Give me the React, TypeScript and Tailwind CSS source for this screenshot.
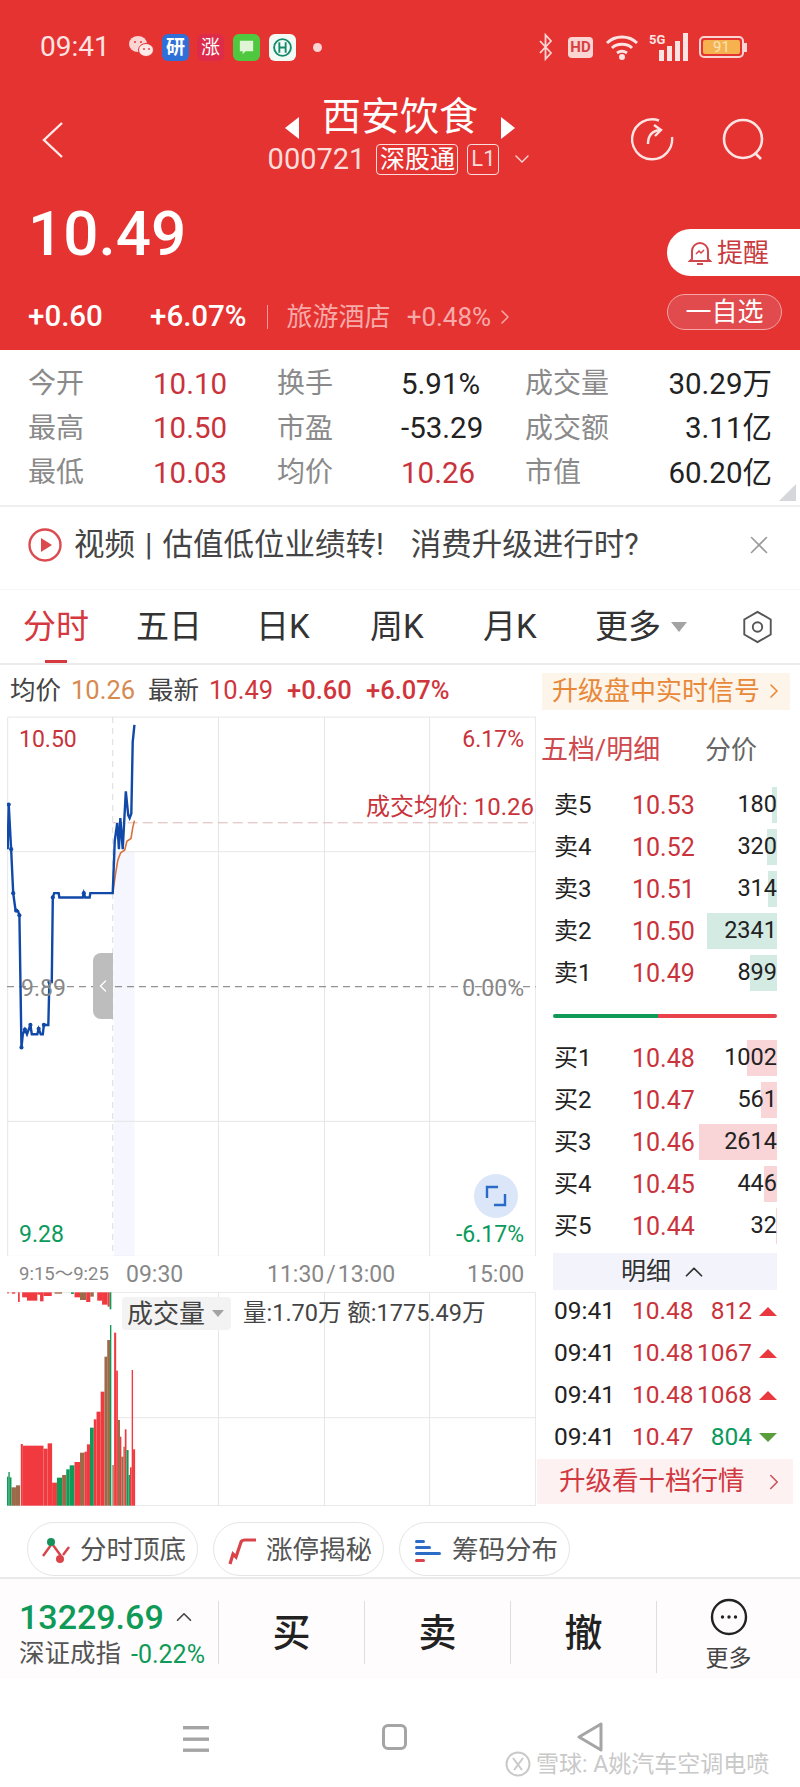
import { ChevronDown, ChevronLeft, ChevronRight, ChevronUp, X } from "lucide-react";

const sell = [
  { label: "卖5", price: "10.53", qty: "180", bar: 5 },
  { label: "卖4", price: "10.52", qty: "320", bar: 10 },
  { label: "卖3", price: "10.51", qty: "314", bar: 9 },
  { label: "卖2", price: "10.50", qty: "2341", bar: 70 },
  { label: "卖1", price: "10.49", qty: "899", bar: 27 }
];

const buy = [
  { label: "买1", price: "10.48", qty: "1002", bar: 30 },
  { label: "买2", price: "10.47", qty: "561", bar: 16 },
  { label: "买3", price: "10.46", qty: "2614", bar: 78 },
  { label: "买4", price: "10.45", qty: "446", bar: 13 },
  { label: "买5", price: "10.44", qty: "32", bar: 1 }
];

const ticks = [
  { price: "10.48", qty: "812", up: true },
  { price: "10.48", qty: "1067", up: true },
  { price: "10.48", qty: "1068", up: true },
  { price: "10.47", qty: "804", up: false }
];

const stats = [
  ["今开", "10.10", "换手", "5.91%", "成交量", "30.29万"],
  ["最高", "10.50", "市盈", "-53.29", "成交额", "3.11亿"],
  ["最低", "10.03", "均价", "10.26", "市值", "60.20亿"]
];

const linePoints =
  "22,390 25,265 32,390 38,513 45,562 52,563 56,575 62,945 66,908 72,895 78,908 88,882 92,908 108,908 112,893 118,908 124,908 127,882 140,882 143,762 150,762 153,525 157,513 170,513 172,525 240,525 243,513 247,525 260,525 262,513 327,513 333,365 340,317 345,390 349,303 356,390 365,228 372,295 376,303 381,290 385,90 390,42";

const avgPoints = "327,513 335,460 342,420 350,400 362,392 368,368 380,360 385,330 390,310";

const RED = "#f03a40";
const GREEN = "#0f9a58";
const MIX = "#9c6a48";

// x0, x1, top (all in zoomed chart units), colour
const volumeBars: [number, number, number, string][] = [
  [20, 24, 650, GREEN], [24, 28, 636, GREEN], [28, 33, 652, GREEN], [33, 46, 682, MIX], [46, 58, 676, MIX],
  [60, 66, 552, RED], [66, 126, 557, RED], [126, 138, 566, RED], [138, 151, 550, RED], [151, 165, 668, RED],
  [165, 180, 653, GREEN], [180, 192, 645, MIX], [192, 202, 628, GREEN], [202, 216, 616, GREEN], [216, 232, 606, RED],
  [232, 245, 578, MIX], [245, 252, 575, RED], [252, 261, 553, RED], [261, 272, 503, GREEN], [272, 280, 478, RED],
  [280, 292, 455, RED], [292, 303, 395, RED], [303, 311, 290, MIX], [311, 319, 240, MIX], [319, 323, 195, GREEN],
  [326, 330, 615, MIX], [331, 337, 218, RED], [337, 342, 332, RED], [342, 348, 480, MIX], [348, 352, 530, RED],
  [352, 358, 590, MIX], [358, 362, 560, MIX], [362, 367, 508, RED], [367, 373, 570, GREEN], [373, 377, 645, GREEN],
  [377, 382, 622, RED], [382, 386, 330, RED], [386, 392, 568, RED]
];

const auctionBars: [number, number, number, string][] = [
  [20, 26, 100, RED], [34, 44, 101, RED], [52, 57, 126, RED], [64, 78, 112, RED], [78, 108, 122, RED],
  [108, 116, 104, RED], [116, 126, 124, RED], [126, 150, 108, RED], [158, 180, 101, MIX], [206, 214, 102, GREEN],
  [216, 232, 112, RED], [232, 250, 120, MIX], [250, 262, 126, RED], [262, 272, 110, MIX], [282, 296, 122, RED],
  [296, 312, 134, RED], [312, 318, 140, RED], [318, 323, 148, GREEN]
];

function StatusIcons() {
  return (
    <div className="flex h-[94px] items-center pl-[40px] pr-[53px] text-[#fde4e3]">
      <span className="w-[88px] text-[28px] leading-none">09:41</span>
      <svg viewBox="0 0 26 24" className="h-[24px] w-[26px]" aria-hidden="true">
        <ellipse cx="10" cy="9" rx="9" ry="8" fill="#fbd5d3" />
        <ellipse cx="18" cy="15" rx="7.5" ry="6.5" fill="#fde9e8" stroke="#e53332" strokeWidth="1" />
        <circle cx="7" cy="7" r="1" fill="#e53332" />
        <circle cx="13" cy="7" r="1" fill="#e53332" />
        <circle cx="16" cy="14" r="0.9" fill="#e53332" />
        <circle cx="21" cy="14" r="0.9" fill="#e53332" />
      </svg>
      <div className="ml-[8px] flex h-[27px] w-[27px] items-center justify-center rounded-[6px] bg-[#2f6fd8] text-[19px] font-bold leading-none text-white">研</div>
      <div className="ml-[8px] flex h-[27px] w-[27px] items-center justify-center rounded-[6px] bg-[#dd2b4a] text-[19px] leading-none text-white">涨</div>
      <div className="ml-[9px] flex h-[27px] w-[27px] items-center justify-center rounded-[6px] bg-[#4fc83f]">
        <svg viewBox="0 0 20 20" className="h-[19px] w-[19px]" aria-hidden="true">
          <path d="M3 3h14v11H9l-3 3v-3H3z" fill="#dff5d5" />
        </svg>
      </div>
      <div className="ml-[9px] flex h-[27px] w-[27px] items-center justify-center rounded-[6px] bg-[#f2faf6]">
        <svg viewBox="0 0 20 20" className="h-[21px] w-[21px]" aria-hidden="true">
          <circle cx="10" cy="10" r="8" fill="none" stroke="#168a6a" strokeWidth="1.8" />
          <path d="M7 5v10M13 5v10M7 10h6" stroke="#168a6a" strokeWidth="1.8" />
        </svg>
      </div>
      <div className="ml-[17px] h-[9px] w-[9px] rounded-full bg-[#fbd5d3]" />
      <div className="ml-auto flex items-center">
        <svg viewBox="0 0 16 28" className="h-[28px] w-[16px]" fill="none" stroke="#fbd5d3" strokeWidth="1.8" aria-hidden="true">
          <path d="M2 8l11 12-5.5 6V2L13 8 2 20" />
        </svg>
        <div className="ml-[14px] flex h-[21px] w-[25px] items-center justify-center rounded-[4px] bg-[#fbd5d3] text-[15px] font-bold leading-none text-[#d8403f]">HD</div>
        <svg viewBox="0 0 34 26" className="ml-[12px] h-[26px] w-[34px]" fill="none" stroke="#fde4e3" strokeWidth="3" aria-hidden="true">
          <path d="M2 9c8-8 22-8 30 0M7 14c5-5 15-5 20 0M12 19c3-2 7-2 10 0" />
          <circle cx="17" cy="23" r="1.5" fill="#fde4e3" />
        </svg>
        <div className="relative ml-[10px] h-[28px] w-[39px]">
          <span className="absolute left-0 top-0 text-[13px] font-bold leading-none">5G</span>
          <div className="absolute bottom-0 right-0 flex items-end gap-[3px]">
            <div className="h-[11px] w-[5px] bg-[#fde4e3]" />
            <div className="h-[15px] w-[5px] bg-[#fde4e3]" />
            <div className="h-[20px] w-[5px] bg-[#fde4e3]" />
            <div className="h-[28px] w-[5px] bg-[#fde4e3]" />
          </div>
        </div>
        <div className="ml-[11px] flex h-[22px] w-[45px] items-center rounded-[5px] border-2 border-[#fbd5d3] p-[2px]">
          <div className="flex h-full w-[38px] items-center justify-center rounded-[2px] bg-[#f6b24e] text-[15px] leading-none text-[#fbe3b9]">91</div>
        </div>
        <div className="h-[9px] w-[3px] bg-[#fbd5d3]" />
      </div>
    </div>
  );
}

function Header() {
  return (
    <header className="h-[350px] bg-[#e53332] text-white">
      <StatusIcons />
      <div className="relative h-[88px]">
        <svg viewBox="0 0 24 38" className="absolute left-[41px] top-[27px] h-[38px] w-[24px]" fill="none" stroke="#fde9e8" strokeWidth="2.4" aria-hidden="true">
          <path d="M21 2L3 19l18 17" />
        </svg>
        <div className="flex flex-col items-center pt-[1px]">
          <div className="flex h-[44px] items-center">
            <div className="mt-[22px] h-0 w-0 border-y-[11px] border-r-[14px] border-y-transparent border-r-white" />
            <span className="mx-[23px] text-[39px] leading-none">西安饮食</span>
            <div className="mt-[22px] h-0 w-0 border-y-[11px] border-l-[14px] border-y-transparent border-l-white" />
          </div>
          <div className="mt-[4px] flex h-[32px] items-center pl-[2px] text-[#fbdcda]">
            <span className="text-[29px] leading-none">000721</span>
            <span className="ml-[11px] flex h-[31px] w-[82px] items-center justify-center rounded-[4px] border border-[#fbdcda] text-[25px] leading-none text-white">深股通</span>
            <span className="ml-[9px] flex h-[31px] w-[32px] items-center justify-center rounded-[4px] border border-[#fbdcda] text-[22px] leading-none">L1</span>
            <ChevronDown className="ml-[11px] size-[24px]" strokeWidth={1.4} aria-hidden="true" />
          </div>
        </div>
        <svg viewBox="0 0 44 44" className="absolute left-[631px] top-[23px] size-[44px]" fill="none" stroke="#fde4e3" strokeWidth="2.4" aria-hidden="true">
          <path d="M28 3.5A20 20 0 1 0 41 20" />
          <path d="M17 27c0-8 3-13 12-14M23 8l7 5-6 6" />
        </svg>
        <svg viewBox="0 0 44 44" className="absolute left-[722px] top-[24px] size-[44px]" fill="none" stroke="#fde4e3" strokeWidth="2.6" aria-hidden="true">
          <circle cx="21" cy="21" r="19" />
          <path d="M33 35l6 6" />
        </svg>
      </div>
      <div className="flex h-[168px] justify-between">
        <div className="pl-[28px]">
          <div className="mt-[21px] text-[62px] font-medium leading-[62px]">10.49</div>
          <div className="mt-[37px] flex h-[30px] items-center">
            <span className="w-[122px] text-[29.5px] font-medium leading-none">+0.60</span>
            <span className="text-[29.5px] font-medium leading-none">+6.07%</span>
            <div className="ml-[20px] h-[24px] w-px bg-[#f59a99]" />
            <span className="ml-[19px] text-[26px] leading-none text-[#f7aaa8]">旅游酒店</span>
            <span className="ml-[16px] text-[26px] leading-none text-[#f7aaa8]">+0.48%</span>
            <ChevronRight className="ml-[2px] size-[24px] text-[#f7aaa8]" strokeWidth={1.5} aria-hidden="true" />
          </div>
        </div>
        <div className="flex w-[133px] flex-col pt-[47px]">
          <div className="flex h-[47px] items-center rounded-l-[24px] bg-white pl-[21px] text-[#c93a40]">
            <svg viewBox="0 0 24 26" className="h-[26px] w-[24px]" fill="none" stroke="#d2474c" strokeWidth="2" aria-hidden="true">
              <path d="M4 19V11a8 8 0 0 1 16 0v8l2 2H2zM9 24h6" />
              <path d="M8 14l3-3 2 2 3-3" strokeWidth="1.5" />
            </svg>
            <span className="ml-[5px] text-[26px] leading-none">提醒</span>
          </div>
          <div className="mt-[18px] flex h-[36px] w-[115px] items-center justify-center rounded-full border border-[#f4a5a4] bg-[#e14b4d] text-[26px] leading-none">一自选</div>
        </div>
      </div>
    </header>
  );
}

function StatsTable() {
  return (
    <section className="relative h-[157px] border-b-2 border-[#efefef] px-[28px] pt-[12px]">
      {stats.map((row) => (
        <div key={row[0]} className="grid h-[44.5px] grid-cols-[125px_124px_124px_124px_1fr] items-center leading-none">
          <span className="text-[28px] text-[#8a8a8a]">{row[0]}</span>
          <span className="text-[29.5px] text-[#c9333b]">{row[1]}</span>
          <span className="text-[28px] text-[#8a8a8a]">{row[2]}</span>
          <span className={`text-[29.5px] ${row[2] === "均价" ? "text-[#c9333b]" : "text-[#222]"}`}>{row[3]}</span>
          <div className="flex items-center justify-between">
            <span className="text-[28px] text-[#8a8a8a]">{row[4]}</span>
            <span className="text-[29.5px] text-[#222]">{row[5]}</span>
          </div>
        </div>
      ))}
      <div className="absolute bottom-[4px] right-[4px] h-0 w-0 border-b-[17px] border-l-[17px] border-b-[#d5d7da] border-l-transparent" />
    </section>
  );
}

function VideoBanner() {
  return (
    <section className="flex h-[83px] items-center border-b border-[#f7f7f7] pb-[6px] pl-[28px] pr-[26px]">
      <svg viewBox="0 0 34 34" className="size-[34px]" aria-hidden="true">
        <circle cx="17" cy="17" r="15.5" fill="none" stroke="#dc4a4f" strokeWidth="2.4" />
        <path d="M13 10l11 7-11 7z" fill="#dc4a4f" />
      </svg>
      <div className="ml-[12px] flex whitespace-nowrap text-[30.5px] leading-none text-[#444]">
        <span>视频</span>
        <span className="mx-[10px]">|</span>
        <span>估值低位业绩转!</span>
        <span className="ml-[27px]">消费升级进行时?</span>
      </div>
      <X className="ml-auto size-[30px] text-[#999]" strokeWidth={1.3} aria-hidden="true" />
    </section>
  );
}

function Tabs() {
  return (
    <nav className="relative flex h-[75px] items-center border-b-2 border-[#ececec] pl-[23px] text-[33px] leading-none text-[#333]">
      <span className="w-[113px] text-[#d6383f]">分时</span>
      <span className="w-[120px]">五日</span>
      <span className="w-[114px]">日K</span>
      <span className="w-[113px]">周K</span>
      <span className="w-[112px]">月K</span>
      <span>更多</span>
      <div className="ml-[10px] h-0 w-0 border-x-[8px] border-t-[10px] border-x-transparent border-t-[#a3a3a3]" />
      <svg viewBox="0 0 32 36" className="ml-[55px] h-[34px] w-[31px]" fill="none" stroke="#555" strokeWidth="2" aria-hidden="true">
        <path d="M16 2l14 8v16l-14 8-14-8V10z" />
        <circle cx="16" cy="18" r="5" />
      </svg>
      <div className="absolute bottom-0 left-[45px] h-[3px] w-[22px] bg-[#d6383f]" />
    </nav>
  );
}

function QuoteLine() {
  return (
    <section className="flex h-[51px] items-center pl-[10px] pr-[10px] pt-[1px] text-[25.5px] leading-none">
      <span className="w-[61px] text-[#444]">均价</span>
      <span className="w-[77px] text-[#d68a50]">10.26</span>
      <span className="w-[61px] text-[#444]">最新</span>
      <span className="w-[78px] text-[#d1353c]">10.49</span>
      <span className="w-[79px] font-medium text-[#d1353c]">+0.60</span>
      <span className="font-medium text-[#d1353c]">+6.07%</span>
      <div className="ml-auto flex h-[37px] w-[248px] items-center bg-[#fdf4ea] pl-[10px] text-[26px] text-[#e8893a]">
        <span>升级盘中实时信号</span>
        <ChevronRight className="ml-[2px] size-[24px]" strokeWidth={1.6} aria-hidden="true" />
      </div>
    </section>
  );
}

function PriceChart() {
  return (
    <div className="relative h-[540px]">
      <svg viewBox="20 17 1536 1512" preserveAspectRatio="none" className="absolute inset-0 h-full w-full" aria-hidden="true">
        <rect x="330" y="397" width="60" height="1133" fill="#f5f6fe" />
        <rect x="22" y="20" width="1533" height="1510" fill="none" stroke="#e6e6e6" strokeWidth="1" vectorEffect="non-scaling-stroke" />
        <path d="M22 397H1555M22 1152H1555M634 20V1530M942 20V1530M1247 20V1530" stroke="#e6e6e6" fill="none" vectorEffect="non-scaling-stroke" />
        <path d="M327 20V1530" stroke="#dcdcdc" strokeDasharray="6 5" fill="none" vectorEffect="non-scaling-stroke" />
        <path d="M327 316H1550" stroke="#dcb7b7" strokeDasharray="10 5" fill="none" vectorEffect="non-scaling-stroke" />
        <path d="M20 775H1555" stroke="#777" strokeDasharray="7 5" fill="none" vectorEffect="non-scaling-stroke" />
        <polyline points={avgPoints} fill="none" stroke="#d9723c" strokeWidth="1.6" vectorEffect="non-scaling-stroke" />
        <polyline points={linePoints} fill="none" stroke="#1149a8" strokeWidth="2.4" vectorEffect="non-scaling-stroke" />
        <g fill="#1149a8">
          <ellipse cx="25" cy="265" rx="6" ry="6" />
          <ellipse cx="32" cy="390" rx="6" ry="6" />
          <ellipse cx="38" cy="513" rx="6" ry="6" />
          <ellipse cx="47" cy="562" rx="6" ry="6" />
          <ellipse cx="56" cy="575" rx="6" ry="6" />
          <ellipse cx="62" cy="945" rx="6" ry="6" />
          <ellipse cx="72" cy="895" rx="6" ry="6" />
          <ellipse cx="88" cy="882" rx="6" ry="6" />
          <ellipse cx="112" cy="893" rx="6" ry="6" />
          <ellipse cx="127" cy="882" rx="6" ry="6" />
          <ellipse cx="143" cy="762" rx="6" ry="6" />
          <ellipse cx="153" cy="525" rx="6" ry="6" />
          <ellipse cx="243" cy="513" rx="6" ry="6" />
        </g>
      </svg>
      <span className="absolute left-[12px] top-[12px] text-[23px] leading-[23px] text-[#c9333b]">10.50</span>
      <span className="absolute right-[12px] top-[12px] text-[23px] leading-[23px] text-[#c9333b]">6.17%</span>
      <span className="absolute right-[2px] top-[79px] text-[24px] leading-[24px] text-[#c9333b]">成交均价: 10.26</span>
      <span className="absolute left-[14px] top-[261px] text-[23px] leading-[23px] text-[#888]">9.89</span>
      <span className="absolute right-[12px] top-[261px] text-[23px] leading-[23px] text-[#888]">0.00%</span>
      <span className="absolute bottom-[10px] left-[12px] text-[23px] leading-[23px] text-[#0a9a5c]">9.28</span>
      <span className="absolute bottom-[10px] right-[12px] text-[23px] leading-[23px] text-[#0a9a5c]">-6.17%</span>
      <div className="absolute left-[86px] top-[237px] flex h-[66px] w-[20px] items-center justify-center rounded-l-[8px] bg-[#bdbdbd]">
        <ChevronLeft className="size-[24px] text-white" strokeWidth={1.6} aria-hidden="true" />
      </div>
      <div className="absolute left-[467px] top-[458px] flex size-[44px] items-center justify-center rounded-full bg-[#dbe7f8]">
        <svg viewBox="0 0 24 24" className="size-[24px]" fill="none" stroke="#2a6ac8" strokeWidth="2.4" aria-hidden="true">
          <path d="M3 14V3h11M21 10v11H10" />
        </svg>
      </div>
    </div>
  );
}

function VolumeChart() {
  return (
    <div className="relative h-[214px]">
      <svg viewBox="20 96 1536 642" preserveAspectRatio="none" className="absolute inset-0 h-full w-full" aria-hidden="true">
        <path d="M22 97H1555M327 473H1555M22 737H1555M1555 97V737M634 97V737M942 97V737M1247 97V737" stroke="#e6e6e6" fill="none" vectorEffect="non-scaling-stroke" />
        {auctionBars.map(([x0, x1, h, color]) => (
          <rect key={x0} x={x0} y="97" width={x1 - x0} height={h - 97} fill={color} />
        ))}
        {volumeBars.map(([x0, x1, top, color]) => (
          <rect key={x0} x={x0} y={top} width={x1 - x0} height={737 - top} fill={color} />
        ))}
      </svg>
      <div className="absolute left-[115px] top-[5px] flex h-[33px] w-[109px] items-center rounded-[4px] bg-[#f3f3f3] pl-[5px] text-[26px] leading-none text-[#444]">
        <span>成交量</span>
        <div className="ml-[7px] h-0 w-0 border-x-[6px] border-t-[7px] border-x-transparent border-t-[#a3a3a3]" />
      </div>
      <span className="absolute left-[236px] top-[10px] whitespace-nowrap text-[23.5px] leading-[23px] text-[#444]">量:1.70万 额:1775.49万</span>
    </div>
  );
}

function ChartColumn() {
  return (
    <div className="ml-[7px] w-[529px]">
      <PriceChart />
      <div className="flex h-[36px] items-center pl-[12px] leading-none text-[#888]">
        <span className="w-[107px] whitespace-nowrap text-[18.5px]">9:15～9:25</span>
        <span className="w-[141px] text-[23px]">09:30</span>
        <span className="w-[200px] whitespace-nowrap text-[23px]">11:30<span className="mx-[2px]">/</span>13:00</span>
        <span className="text-[23px]">15:00</span>
      </div>
      <VolumeChart />
    </div>
  );
}

type BookRow = { label: string; price: string; qty: string; bar: number };

function BookRows({ rows, barClass }: { rows: BookRow[]; barClass: string }) {
  return (
    <div>
      {rows.map((row) => (
        <div key={row.label} className="relative flex h-[42px] items-center pl-[18px] pr-[23px] leading-none">
          <div className={`absolute right-[23px] top-[3px] h-[36px] ${barClass}`} style={{ width: row.bar }} />
          <span className="w-[78px] text-[24px] text-[#222]">{row.label}</span>
          <span className="text-[25px] text-[#c9333b]">{row.price}</span>
          <span className="relative ml-auto text-[23.5px] text-[#222]">{row.qty}</span>
        </div>
      ))}
    </div>
  );
}

function OrderBook() {
  return (
    <aside className="w-[264px]">
      <div className="flex h-[68px] items-center pl-[5px] text-[27px] leading-none">
        <span className="w-[164px] text-[#cf4a4e]">五档/明细</span>
        <span className="text-[26px] text-[#666]">分价</span>
      </div>
      <BookRows rows={sell} barClass="bg-[#d3ebe2]" />
      <div className="flex h-[43px] items-center pl-[17px] pr-[23px]">
        <div className="h-[4px] w-[105px] rounded-l-full bg-[#0f9a58]" />
        <div className="h-[4px] flex-1 rounded-r-full bg-[#e8434a]" />
      </div>
      <BookRows rows={buy} barClass="bg-[#f9d5d8]" />
      <div className="ml-[17px] mr-[23px] mt-[6px] flex h-[37px] items-center justify-center bg-[#f3f4fb] text-[25px] leading-none text-[#333]">
        <span>明细</span>
        <ChevronUp className="ml-[8px] size-[30px]" strokeWidth={1.4} aria-hidden="true" />
      </div>
      <div>
        {ticks.map((tick) => (
          <div key={tick.qty} className="flex h-[42px] items-center pl-[18px] pr-[23px] text-[24.5px] leading-none">
            <span className="w-[78px] text-[#222]">09:41</span>
            <span className="text-[#c9333b]">{tick.price}</span>
            <span className={`ml-auto ${tick.up ? "text-[#c9333b]" : "text-[#0a9a5c]"}`}>{tick.qty}</span>
            {tick.up ? (
              <div className="ml-[7px] h-0 w-0 border-x-[9px] border-b-[9px] border-x-transparent border-b-[#e8393f]" />
            ) : (
              <div className="ml-[7px] h-0 w-0 border-x-[9px] border-t-[9px] border-x-transparent border-t-[#5a9e3c]" />
            )}
          </div>
        ))}
      </div>
      <div className="ml-[1px] mr-[7px] mt-[1px] flex h-[45px] items-center bg-[#fdf1f2] pl-[22px] text-[26.5px] leading-none text-[#d2383f]">
        <span>升级看十档行情</span>
        <ChevronRight className="ml-[16px] size-[26px] text-[#c9575c]" strokeWidth={1.5} aria-hidden="true" />
      </div>
    </aside>
  );
}

function Chips() {
  return (
    <section className="flex h-[73px] items-start gap-[15px] border-b-2 border-[#e9e9e9] pl-[27px] pt-[16px] text-[26.5px] leading-none text-[#555]">
      <div className="flex h-[54px] w-[171px] items-center rounded-full border border-[#e5e5e5] pl-[13px] pt-[3px]">
        <svg viewBox="0 0 30 30" className="size-[30px]" fill="none" strokeWidth="2.4" aria-hidden="true">
          <path d="M2 20l8-11M12 9l8 11M22 19l6-8" stroke="#d9444a" />
          <circle cx="10" cy="6" r="4" fill="#14925a" />
          <circle cx="19" cy="23" r="4" fill="#d9444a" />
        </svg>
        <span className="ml-[9px]">分时顶底</span>
      </div>
      <div className="flex h-[54px] w-[171px] items-center rounded-full border border-[#e5e5e5] pl-[14px] pt-[3px]">
        <svg viewBox="0 0 30 30" className="size-[30px]" fill="none" stroke="#d9444a" strokeWidth="3.2" aria-hidden="true">
          <path d="M2 28l3-10 3 3 5-15c1-2 2-2 4-2h11" />
        </svg>
        <span className="ml-[8px]">涨停揭秘</span>
      </div>
      <div className="flex h-[54px] w-[171px] items-center rounded-full border border-[#e5e5e5] pl-[15px] pt-[3px]">
        <svg viewBox="0 0 28 30" className="h-[30px] w-[28px]" aria-hidden="true">
          <rect x="0" y="4" width="10" height="3" rx="1.5" fill="#2c6cc6" />
          <rect x="0" y="10" width="16" height="3" rx="1.5" fill="#2c6cc6" />
          <rect x="0" y="16" width="26" height="3" rx="1.5" fill="#2c6cc6" />
          <rect x="0" y="23" width="10" height="3" rx="1.5" fill="#d9444a" />
        </svg>
        <span className="ml-[9px]">筹码分布</span>
      </div>
    </section>
  );
}

function TradeAction({ label }: { label: string }) {
  return (
    <div className="flex h-[63px] w-[146px] items-center justify-center border-l border-[#dedede] text-[38px] font-medium leading-none text-[#222]">
      {label}
    </div>
  );
}

function TradeBar() {
  return (
    <section className="flex h-[100px] items-start bg-[#fefcfd] pt-[22px]">
      <div className="w-[218px] pl-[19px]">
        <div className="flex h-[32px] items-center">
          <span className="text-[34px] font-medium leading-none text-[#0f9a58]">13229.69</span>
          <ChevronUp className="ml-[7px] size-[26px] text-[#444]" strokeWidth={1.5} aria-hidden="true" />
        </div>
        <div className="mt-[6px] flex h-[30px] items-center">
          <span className="text-[25.5px] leading-none text-[#555]">深证成指</span>
          <span className="ml-[10px] text-[25px] leading-none text-[#0f9a58]">-0.22%</span>
        </div>
      </div>
      <TradeAction label="买" />
      <TradeAction label="卖" />
      <TradeAction label="撤" />
      <div className="flex h-[72px] flex-1 flex-col items-center border-l border-[#dedede]">
        <svg viewBox="0 0 38 38" className="-mt-[3px] size-[38px]" aria-hidden="true">
          <circle cx="19" cy="19" r="17" fill="none" stroke="#222" strokeWidth="2.4" />
          <circle cx="12.5" cy="19" r="1.7" fill="#222" />
          <circle cx="19" cy="19" r="1.7" fill="#222" />
          <circle cx="25.5" cy="19" r="1.7" fill="#222" />
        </svg>
        <span className="mt-[11px] text-[23px] leading-[23px] text-[#444]">更多</span>
      </div>
    </section>
  );
}

function SystemNav() {
  return (
    <footer className="relative h-[107px] bg-white">
      <svg viewBox="0 0 26 26" className="absolute left-[183px] top-[47px] size-[26px]" fill="#a5a5a5" aria-hidden="true">
        <rect x="0" y="0" width="26" height="3.4" />
        <rect x="0" y="11.5" width="26" height="3.4" />
        <rect x="0" y="22.5" width="26" height="3.4" />
      </svg>
      <div className="absolute left-[382px] top-[45px] h-[26px] w-[25px] rounded-[6px] border-[3px] border-[#a5a5a5]" />
      <svg viewBox="0 0 28 30" className="absolute left-[576px] top-[43px] h-[30px] w-[28px]" fill="none" stroke="#a5a5a5" strokeWidth="3" strokeLinejoin="round" aria-hidden="true">
        <path d="M25 2v26L3 15z" />
      </svg>
      <div className="absolute left-[505px] top-[72px] flex items-center text-[23px] leading-none text-[#c9c9c9]">
        <svg viewBox="0 0 26 26" className="size-[26px]" fill="none" stroke="#c9c9c9" strokeWidth="2" aria-hidden="true">
          <circle cx="13" cy="13" r="11.5" />
          <path d="M8 7l9 12M18 7l-9 12" />
        </svg>
        <span className="ml-[5px] whitespace-nowrap">雪球: A姚汽车空调电喷</span>
      </div>
    </footer>
  );
}

export default function App() {
  return (
    <div className="h-[1787px] w-[800px] overflow-hidden bg-white font-[Roboto,'Noto_Sans_CJK_SC',sans-serif]">
      <Header />
      <StatsTable />
      <VideoBanner />
      <Tabs />
      <QuoteLine />
      <div className="flex h-[790px]">
        <ChartColumn />
        <OrderBook />
      </div>
      <Chips />
      <TradeBar />
      <SystemNav />
    </div>
  );
}
